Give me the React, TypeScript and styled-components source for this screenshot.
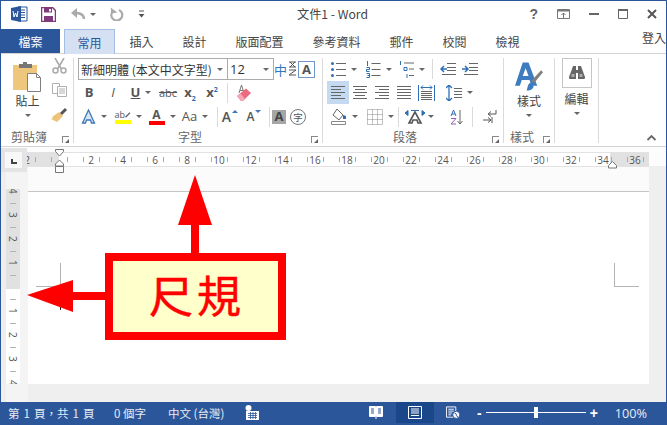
import React from 'react';
import styled, { createGlobalStyle } from 'styled-components';

const GlobalStyle = createGlobalStyle`
  html, body { margin: 0; padding: 0; background: #fff; }
  body { font-family: "Open Sans", "Noto Sans CJK TC", sans-serif; overflow: hidden; }
  * { box-sizing: border-box; }
`;

const CJK = `"Noto Sans CJK TC", "Liberation Sans", sans-serif`;
const BLUE = '#2b579a';

const Root = styled.div`
  position: relative;
  width: 667px;
  height: 425px;
  overflow: hidden;
  display: flex;
  flex-direction: column;
  border: solid ${BLUE};
  border-width: 1px 1px 0 1px;
  background: #fff;
  color: #444;
`;

/* title bar */
const TitleBar = styled.div`
  height: 28px;
  padding-bottom: 2px;
  display: grid;
  grid-template-columns: 1fr auto 1fr;
  align-items: center;
`;
const Qat = styled.div`
  display: flex;
  align-items: center;
  padding-left: 10px;
`;
const QatSlot = styled.div<{ $w: number }>`
  width: ${p => p.$w}px;
  display: flex;
  align-items: center;
`;
const Title = styled.div`
  font: 12.2px ${CJK};
  color: #444;
  margin-left: -2px;
`;
const WinButtons = styled.div`
  display: flex;
  justify-content: flex-end;
  align-items: center;
  padding-right: 9px;
  gap: 19px;
`;
const Help = styled.span`
  font: bold 14px "Liberation Sans", sans-serif;
  color: #666;
`;

/* tabs */
const TabBar = styled.div`
  height: 25px;
  display: flex;
  align-items: stretch;
  border-bottom: 1px solid #d4d4d4;
`;
const FileTab = styled.div`
  width: 59px;
  height: 24px;
  background: ${BLUE};
  color: #fff;
  font: 12px ${CJK};
  display: flex;
  align-items: center;
  justify-content: center;
  margin-right: 4px;
`;
const Tab = styled.div`
  padding: 0 14.5px;
  height: 24px;
  font: 12px ${CJK};
  display: flex;
  align-items: center;
  white-space: nowrap;
  color: #444;
`;
const ActiveTab = styled(Tab)`
  width: 51px;
  height: 25px;
  padding: 0;
  justify-content: center;
  color: ${BLUE};
  background: #d5e1f2;
  border: 1px solid #a3bde3;
  border-bottom: 0;
`;
const SignIn = styled.div`
  margin-left: auto;
  margin-right: 0;
  font: 12px ${CJK};
  white-space: nowrap;
`;

/* ribbon */
const Ribbon = styled.div`
  height: 93px;
  display: flex;
  border-bottom: 1px solid #d4d4d4;
  padding-top: 4px;
`;
const Group = styled.div<{ $w: number }>`
  position: relative;
  width: ${p => p.$w}px;
  height: 85px;
  border-right: 1px solid #dadada;
  display: flex;
  flex-direction: column;
`;
const GroupBody = styled.div`
  flex: none;
  height: 70px;
  display: flex;
  flex-direction: column;
`;
const GroupLabel = styled.div<{ $align?: string; $pl?: number; $pr?: number }>`
  height: 15px;
  font: 12px ${CJK};
  color: #666;
  line-height: 18px;
  text-align: ${p => p.$align || 'center'};
  padding-left: ${p => p.$pl || 0}px;
  padding-right: ${p => p.$pr || 0}px;
`;
const Launcher = styled.span`
  position: absolute;
  right: 4px;
  bottom: 0;
  width: 7px;
  height: 7px;
  border-left: 1px solid #888;
  border-top: 1px solid #888;
  &::after {
    content: '';
    position: absolute;
    right: 0;
    bottom: 0;
    border-style: solid;
    border-width: 0 0 4px 4px;
    border-color: transparent transparent #666 transparent;
  }
`;
const Row = styled.div<{ $h: number; $pl?: number; $mt?: number }>`
  display: flex;
  align-items: center;
  height: ${p => p.$h}px;
  padding-left: ${p => p.$pl || 0}px;
  margin-top: ${p => p.$mt || 0}px;
`;
const Slot = styled.div<{ $w: number; $sel?: boolean; $gap?: number }>`
  width: ${p => p.$w}px;
  height: 100%;
  display: flex;
  align-items: center;
  justify-content: center;
  gap: ${p => (p.$gap === undefined ? 5 : p.$gap)}px;
  flex: none;
  background: ${p => (p.$sel ? '#c5d9f1' : 'transparent')};
`;
const VSep = styled.div`
  width: 1px;
  height: 20px;
  background: #dadada;
  flex: none;
`;
const Caret = styled.span<{ $ml?: number }>`
  width: 0;
  height: 0;
  flex: none;
  margin-left: ${p => p.$ml || 0}px;
  border-style: solid;
  border-width: 3px 3.5px 0 3.5px;
  border-color: #666 transparent transparent transparent;
`;
const Combo = styled.div<{ $w: number }>`
  width: ${p => p.$w}px;
  height: 100%;
  border: 1px solid #ababab;
  margin-right: -1px;
  display: flex;
  align-items: center;
  justify-content: space-between;
  padding: 0 4px 0 2px;
  font: 12px ${CJK};
  color: #333;
  white-space: nowrap;
`;
const SizeValue = styled.span`
  font: 13px "Open Sans", sans-serif;
`;
const HanGlyph = styled.span`
  font: 13px/1 ${CJK};
  color: #2f78c0;
`;
const Letter = styled.span<{ $c?: string; $s?: number; $i?: boolean; $u?: boolean; $w?: number; $st?: boolean }>`
  font-family: "Open Sans", sans-serif;
  font-size: ${p => p.$s || 13}px;
  font-weight: ${p => p.$w || 700};
  font-style: ${p => (p.$i ? 'italic' : 'normal')};
  text-decoration: ${p => (p.$u ? 'underline' : p.$st ? 'line-through' : 'none')};
  color: ${p => p.$c || '#555'};
  line-height: 1;
  sup, sub { font-size: 7px; color: #2b6cb0; font-weight: 700; line-height: 0; }
`;
const Swatch = styled.div`
  display: flex;
  flex-direction: column;
  align-items: center;
  line-height: 1;
`;
const SwatchBar = styled.i<{ $c: string }>`
  display: block;
  width: 16px;
  height: 4px;
  background: ${p => p.$c};
`;
const AccentBox = styled.div`
  width: 17px;
  height: 17px;
  border: 1px solid #6f94c6;
  display: flex;
  align-items: center;
  justify-content: center;
`;
const ShadedBox = styled.div`
  width: 14px;
  height: 14px;
  background: #a6a6a6;
  display: flex;
  align-items: center;
  justify-content: center;
`;
const CircleChar = styled.div`
  width: 16px;
  height: 16px;
  border: 1px solid #777;
  border-radius: 50%;
  font: 9.5px/14px ${CJK};
  text-align: center;
  color: #555;
`;
const ClipWrap = styled.div`
  flex: none;
  height: 70px;
  display: flex;
`;
const BigCol = styled.div<{ $w: number; $pl?: number; $pt?: number }>`
  width: ${p => p.$w}px;
  padding-left: ${p => p.$pl || 0}px;
  padding-top: ${p => p.$pt || 0}px;
  display: flex;
  flex-direction: column;
  align-items: center;
`;
const BigText = styled.div<{ $mt?: number }>`
  font: 12px/16px ${CJK};
  color: #444;
  margin-top: ${p => p.$mt || 0}px;
  margin-bottom: 5px;
`;
const SmallCol = styled.div`
  width: 24px;
  margin-top: -4px;
  display: flex;
  flex-direction: column;
  align-items: center;
`;
const SmallBtn = styled.div`
  height: 24px;
  display: flex;
  align-items: center;
`;
const FindBox = styled.div`
  width: 30px;
  height: 30px;
  border: 1px solid #c6c6c6;
  display: flex;
  align-items: center;
  justify-content: center;
  margin-bottom: 3px;
`;
const RibbonEnd = styled.div`
  flex: 1;
  display: flex;
  align-items: flex-end;
  justify-content: flex-end;
  padding: 0 10px 2px 0;
  height: 85px;
`;

/* workspace */
const Workspace = styled.div`
  flex: 1;
  display: grid;
  position: relative;
  grid-template-columns: 27px 621px 1fr;
  grid-template-rows: 19px 236px;
  background: #efefef;
`;
const RulerCell = styled.div`
  grid-column: 1 / span 3;
  padding: 5px 0 0 26px;
  background: #fcfcfc;
`;
const Ruler = styled.div`
  position: relative;
  width: 622px;
  height: 15px;
  display: flex;
  overflow: hidden;
  border: solid #e2e2e2;
  border-width: 1px 0;
  background: linear-gradient(90deg, #e1e1e1 32px, #fff 32px, #fff 583px, #e1e1e1 583px);
`;
const RulerUnit = styled.div<{ $first?: boolean }>`
  flex: none;
  width: 32px;
  margin-left: ${p => (p.$first ? -16 : 0)}px;
  display: flex;
  justify-content: space-between;
  align-items: center;
  padding: 0 7.5px;
  font: 10px "Open Sans", sans-serif;
  color: #555;
`;
const Tick = styled.i`
  display: block;
  width: 1px;
  height: 5px;
  background: #aaa;
`;
const Corner = styled.div`
  position: absolute;
  left: 0;
  top: 1px;
  width: 26px;
  height: 24px;
  background: #e4e4e4;
  padding: 4px;
  z-index: 2;
`;
const CornerInner = styled.div`
  width: 17px;
  height: 16px;
  background: #f8f8f8;
  display: flex;
  align-items: center;
  justify-content: center;
`;
const LMark = styled.i`
  display: block;
  width: 6px;
  height: 5px;
  margin-top: 2px;
  border-left: 2px solid #444;
  border-bottom: 2px solid #444;
`;
const IndentMarks = styled.svg`
  position: absolute;
  left: 53px;
  top: 2px;
  z-index: 3;
`;
const RightIndent = styled.svg`
  position: absolute;
  left: 606px;
  top: 14px;
  z-index: 3;
`;
const VCol = styled.div`
  padding: 23px 0 0 5px;
  background: linear-gradient(90deg, #eee 5px, #f4f4f4 5px);
`;
const VRuler = styled.div`
  width: 14px;
  height: 195px;
  overflow: hidden;
  background: linear-gradient(180deg, #e1e1e1 100px, #fff 100px);
`;
const VUnit = styled.div<{ $first?: boolean }>`
  position: relative;
  height: 24px;
  margin-top: ${p => (p.$first ? -10 : 0)}px;
  display: flex;
  align-items: center;
  justify-content: center;
  font: 10px "Open Sans", sans-serif;
  color: #555;
  writing-mode: vertical-rl;
  &::before {
    content: '';
    position: absolute;
    top: 0;
    left: 4px;
    width: 6px;
    height: 1px;
    background: #b4b4b4;
  }
`;
const DocArea = styled.div`
  padding-top: 25px;
  background: linear-gradient(180deg, #fbfbfb 25px, #efefef 25px);
`;
const Page = styled.div`
  height: 193px;
  background: #fff;
  border-top: 1px solid #c6c6c6;
  display: flex;
  justify-content: space-between;
  align-items: flex-start;
  padding: 71px 10px 0 8px;
`;
const CropLeft = styled.div`
  position: relative;
  width: 25px;
  height: 24px;
  border-right: 1px solid #b4b4b4;
  border-bottom: 1px solid #b4b4b4;
  &::after {
    content: '';
    position: absolute;
    left: 24px;
    top: 24px;
    width: 1px;
    height: 23px;
    background: #222;
  }
`;
const CropRight = styled.div`
  width: 25px;
  height: 24px;
  border-left: 1px solid #b4b4b4;
  border-bottom: 1px solid #b4b4b4;
`;

/* status bar */
const StatusBar = styled.div`
  height: 23px;
  margin: 0 -1px;
  padding: 0 0 2px 8px;
  background: ${BLUE};
  color: #e6ecf5;
  font: 11.5px ${CJK};
  display: flex;
  align-items: center;
`;
const StatusText = styled.span<{ $w: number; $ws?: number }>`
  width: ${p => p.$w}px;
  flex: none;
  white-space: nowrap;
  word-spacing: ${p => p.$ws || 0}px;
`;
const ViewBtn = styled.div<{ $w: number; $on?: boolean; $ml?: number }>`
  width: ${p => p.$w}px;
  margin-left: ${p => p.$ml || 0}px;
  height: 21px;
  display: flex;
  align-items: center;
  justify-content: center;
  background: ${p => (p.$on ? '#19478a' : 'transparent')};
`;
const ZoomSign = styled.span<{ $ml?: number }>`
  font: bold 14px/1 "Liberation Sans", sans-serif;
  color: #fff;
  margin-left: ${p => p.$ml || 0}px;
`;
const ZoomTrack = styled.div`
  position: relative;
  width: 100px;
  height: 1px;
  margin: 0 4px;
  background: #fff;
`;
const ZoomThumb = styled.i`
  position: absolute;
  left: 48px;
  top: -5px;
  width: 4px;
  height: 11px;
  background: #fff;
`;
const ZoomValue = styled.span`
  margin-left: 17px;
  font: 12.7px "Open Sans", sans-serif;
`;

/* annotation */
const Arrows = styled.svg`
  position: absolute;
  left: -1px;
  top: -1px;
  z-index: 5;
`;
const Callout = styled.div`
  position: absolute;
  left: 104px;
  top: 252px;
  width: 181px;
  height: 87px;
  padding: 0 0 5px 3px;
  border: 8px solid #f00;
  background: #ffc;
  color: #f00;
  font: 44px/1 ${CJK};
  letter-spacing: 4px;
  -webkit-text-stroke: 0.5px #f00;
  display: flex;
  align-items: center;
  justify-content: center;
  z-index: 6;
`;

/* icons */
const WordIcon = () => (
  <svg width="17" height="16" viewBox="0 0 17 16">
    <path d="M7 1h9v14H7z" fill="#fff" stroke="#2b579a" />
    <path d="M9 4h5M9 6.500h5M9 9h5M9 11.500h5" stroke="#2b579a" />
    <path d="M0 2l10-2v16L0 14z" fill="#2b579a" />
    <path d="M2 5l1 6 1.500-4 1.500 4 1-6" fill="none" stroke="#fff" />
  </svg>
);
const SaveIcon = () => (
  <svg width="15" height="15" viewBox="0 0 15 15">
    <path d="M.5.500h11l3 3v11H.5z" fill="#fff" stroke="#80397b" strokeWidth="1.500" />
    <path d="M3 1h8v4.500H3zM3 9h9v5H3z" fill="#80397b" />
    <path d="M8 2h2v2.500H8z" fill="#fff" />
  </svg>
);
const UndoIcon = () => (
  <svg width="15" height="14" viewBox="0 0 15 14">
    <path d="M14 12c0-4-3-6-9-6" fill="none" stroke="#aaa" strokeWidth="2.500" />
    <path d="M7 1L1 6l6 5z" fill="#aaa" />
  </svg>
);
const RedoIcon = () => (
  <svg width="14" height="14" viewBox="0 0 14 14">
    <path d="M9 3a5.500 5.500 0 1 1-6 1" fill="none" stroke="#aaa" strokeWidth="2.200" />
    <path d="M1 0v6h6z" fill="#aaa" transform="rotate(-8 4 3)" />
  </svg>
);
const Customize = () => (
  <svg width="7" height="8" viewBox="0 0 7 8">
    <path d="M1 1h5" stroke="#555" />
    <path d="M.5 4h6L3.500 7.500z" fill="#555" />
  </svg>
);
const RestoreIcon = () => (
  <svg width="13" height="10" viewBox="0 0 13 10">
    <path d="M.5.500h12v9H.5z" fill="none" stroke="#777" />
    <path d="M1 1h11v1.500H1z" fill="#777" />
    <path d="M6.500 9V4M4.500 6l2-2 2 2" fill="none" stroke="#777" />
  </svg>
);
const MinIcon = () => (
  <svg width="10" height="3" viewBox="0 0 10 3"><path d="M0 0h10v2H0z" fill="#666" /></svg>
);
const MaxIcon = () => (
  <svg width="10" height="10" viewBox="0 0 10 10">
    <path d="M.5.500h9v9h-9z" fill="none" stroke="#666" /><path d="M0 0h10v2H0z" fill="#666" />
  </svg>
);
const CloseIcon = () => (
  <svg width="10" height="10" viewBox="0 0 10 10">
    <path d="M1 1l8 8M9 1l-8 8" stroke="#555" strokeWidth="2" />
  </svg>
);
const PasteIcon = () => (
  <svg width="29" height="31" viewBox="0 0 29 31">
    <path d="M0 4h24v25H0z" fill="#efc77c" />
    <path d="M6 3h4V1h4v2h5v4H6z" fill="#777" />
    <path d="M14.500 12.500h9l4 4v14h-13z" fill="#fff" stroke="#808080" />
    <path d="M23.500 12.500v4h4" fill="none" stroke="#808080" />
  </svg>
);
const CutIcon = () => (
  <svg width="15" height="16" viewBox="0 0 15 16">
    <path d="M3 0l6.500 11M12 0L5.500 11" stroke="#aaa" strokeWidth="1.600" />
    <circle cx="3.500" cy="12.500" r="2.500" fill="none" stroke="#aaa" strokeWidth="1.500" />
    <circle cx="11.500" cy="12.500" r="2.500" fill="none" stroke="#aaa" strokeWidth="1.500" />
  </svg>
);
const CopyIcon = () => (
  <svg width="15" height="14" viewBox="0 0 15 14" fill="#fff" stroke="#b0b0b0">
    <path d="M.5.500h7v10h-7z" /><path d="M5.500 3.500h9v10h-9z" />
    <path d="M7 6h6M7 8h6M7 10h6" />
  </svg>
);
const PainterIcon = () => (
  <svg width="17" height="15" viewBox="0 0 17 15">
    <path d="M8 5l4 4-6 6-6-3 2-1-1-1z" fill="#edc37c" />
    <path d="M10 7l5-5" stroke="#555" strokeWidth="3" />
  </svg>
);
const FontSizeGlyph = () => (
  <svg width="9" height="16" viewBox="0 0 9 16" fill="none" stroke="#555">
    <path d="M1 1h7M2 1l5 5M7 1L2 6M1 6h7M1 9h7l-7 5h7" />
  </svg>
);
const EraserIcon = () => (
  <svg width="16" height="17" viewBox="0 0 16 17">
    <path d="M3 9L5.500 1 8 9M4 6.500h3" fill="none" stroke="#777" />
    <path d="M1 12l9-7.500 5 4.500-8 8H5z" fill="#ec6b80" />
    <path d="M1 12l4 5h2l2-2-4.500-5.500z" fill="#f4a6b3" />
  </svg>
);
const OutlineA = () => (
  <svg width="15" height="15" viewBox="0 0 15 15">
    <path d="M7.500 1l-6 13h3l1-3h4l1 3h3z" fill="#d6e6f6" stroke="#3e78b8" strokeWidth="1.300" />
  </svg>
);
const PenStroke = () => (
  <svg width="10" height="10" viewBox="0 0 10 10">
    <path d="M1 9l8-8" stroke="#666" strokeWidth="2.500" />
  </svg>
);
const GrowMark = ({ up }: { up: boolean }) => (
  <svg width="6" height="14" viewBox="0 0 6 14">
    <path d={up ? 'M0 3l3-3 3 3z' : 'M0 0h6L3 3z'} fill="#3e78b8" />
  </svg>
);
const line = '#666';
const ListIcon = ({ kind }: { kind: 'bullet' | 'num' | 'multi' }) => (
  <svg width="15" height="17" viewBox="0 0 15 17">
    {kind === 'bullet' && (
      <>
        <circle cx="1.500" cy="2.500" r="1.500" fill="#2f6fb3" />
        <circle cx="1.500" cy="8.500" r="1.500" fill="#2f6fb3" />
        <circle cx="1.500" cy="14.500" r="1.500" fill="#2f6fb3" />
        <path d="M5 2.500h10M5 8.500h10M5 14.500h10" stroke={line} />
      </>
    )}
    {kind === 'num' && (
      <>
        <path d="M1.500 0v5M.5 6.500h3v2h-3v2h3M.5 12.500h3v4h-3M1.500 14.500h2" stroke="#2f6fb3" fill="none" />
        <path d="M5.500 2.500h9M5.500 8.500h9M5.500 14.500h9" stroke={line} />
      </>
    )}
    {kind === 'multi' && (
      <>
        <path d="M1.500 0v4M5 6.500h3v3H5zM8 13v4" stroke="#2f6fb3" fill="none" />
        <path d="M5 2h10M10 8h5M10 14.500h5" stroke={line} />
      </>
    )}
  </svg>
);
const IndentIcon = ({ out }: { out: boolean }) => (
  <svg width="16" height="12" viewBox="0 0 16 12">
    <path d="M7 .5h9M7 4.500h9M7 7.500h9M2 11.500h14" stroke={line} />
    <path d={out ? 'M7 6H2M4 3L1 6l3 3' : 'M0 6h5M3 3l3 3-3 3'} stroke="#2f6fb3" strokeWidth="1.500" fill="none" />
  </svg>
);
const AlignIcon = ({ mode }: { mode: 'l' | 'c' | 'r' | 'j' }) => {
  const rows = [14, 10, 14, 10, 14].map((w, i) => {
    const full = mode === 'j' ? 14 : w;
    const x = mode === 'c' ? (14 - full) / 2 : mode === 'r' ? 14 - full : 0;
    return `M${x} ${i * 3 + 0.5}h${full}`;
  });
  return (
    <svg width="14" height="13" viewBox="0 0 14 13">
      <path d={rows.join('')} stroke={line} />
    </svg>
  );
};
const DistributeIcon = () => (
  <svg width="17" height="16" viewBox="0 0 17 16">
    <path d="M.5 0v16M16.500 0v16" stroke="#2f6fb3" />
    <path d="M3 2.500h11M5 .5L3 2.500l2 2M12 .5l2 2-2 2" stroke="#2f6fb3" fill="none" />
    <path d="M3 6.500h11M3 8.500h11M3 10.500h11M3 12.500h11M3 14.500h11" stroke={line} />
  </svg>
);
const SpacingIcon = () => (
  <svg width="16" height="16" viewBox="0 0 16 16">
    <path d="M3 0v16M0 3l3-3 3 3M0 13l3 3 3-3" stroke="#2f6fb3" fill="none" strokeWidth="1.300" />
    <path d="M8 3.500h8M8 6.500h8M8 9.500h8M8 12.500h8" stroke={line} />
  </svg>
);
const ShadingIcon = () => (
  <svg width="16" height="17" viewBox="0 0 16 17">
    <path d="M.5 13.500h14v3H.5z" fill="#fff" stroke="#888" />
    <path d="M6 1l6 6-4 5-6-5z" fill="#fff" stroke="#666" />
    <path d="M12 7l3 1v3h-3z" fill="#2f6fb3" />
  </svg>
);
const BordersIcon = () => (
  <svg width="16" height="16" viewBox="0 0 16 16">
    <path d="M.5.500h15v15H.5zM.5 5.500h15M.5 10.500h15M5.500.5v15M10.500.5v15" fill="none" stroke="#888" strokeDasharray="1 1" />
  </svg>
);
const TextDirIcon = () => (
  <svg width="20" height="15" viewBox="0 0 20 15">
    <path d="M10 3L4 14h3l1-3h4l1 3h3z" fill="none" stroke="#555" strokeWidth="1.600" />
    <path d="M0 4l3-2.500v5zM20 4l-3-2.500v5zM6 1.500h8" fill="#2f6fb3" stroke="#2f6fb3" />
  </svg>
);
const SortIcon = () => (
  <svg width="13" height="16" viewBox="0 0 13 16">
    <path d="M3.500 1L1 7M3.500 1L6 7M2 5h3" stroke="#2f6fb3" fill="none" />
    <path d="M1 9.500h5l-5 5.500h5" stroke="#8e5bb5" fill="none" />
    <path d="M10 1v14M7.500 12l2.500 3 2.500-3" stroke="#666" fill="none" />
  </svg>
);
const MarksIcon = () => (
  <svg width="14" height="14" viewBox="0 0 14 14">
    <path d="M13 0v4H6M8 1.500L5 4l3 2.500" stroke="#555" fill="none" />
    <path d="M0 10h7M5 7.500L8 10l-3 2.500M9 7v6" stroke="#555" fill="none" />
  </svg>
);
const StyleIcon = () => (
  <svg width="29" height="30" viewBox="0 0 30 30">
    <path d="M8 0h6l9 24h-6l-2-6H7l-2 6H0zM11 6l-3 8h6z" fill="#3f7cbf" fillRule="evenodd" />
    <path d="M17 19l10-11 2 2-9 11z" fill="#808080" />
    <path d="M12 29c5 0 8-2 7-6l-3-2c-3 1-3 6-4 8z" fill="#3f7cbf" />
  </svg>
);
const BinocularIcon = () => (
  <svg width="16" height="14" viewBox="0 0 16 14" fill="#666">
    <path d="M4 0h3v13H1c-1 0-1-1-1-2l3-8zM9 0h3l1 3 3 8c0 1 0 2-1 2H9z" />
    <path d="M7 4h2v3H7z" />
    <path d="M2.500 8h3v3h-3zM10.500 8h3v3h-3z" fill="#aaa" />
  </svg>
);
const Chevron = () => (
  <svg width="9" height="6" viewBox="0 0 9 6">
    <path d="M.5 5l4-4 4 4" fill="none" stroke="#666" strokeWidth="1.800" />
  </svg>
);
const MacroIcon = () => (
  <svg width="14" height="15" viewBox="0 0 14 15" fill="#fff">
    <circle cx="3.500" cy="3" r="3" />
    <path d="M1 6h13v9H1z" />
    <path d="M3 8.500h9M3 10.500h9M3 12.500h9M5.500 7v7M8 7v7M10.500 7v7" stroke="#2b579a" strokeWidth=".8" />
  </svg>
);
const ReadIcon = () => (
  <svg width="14" height="13" viewBox="0 0 14 13">
    <path d="M.5.500h6v10l-6 0zM7.500.500h6v10h-6z" fill="#fff" stroke="#fff" />
    <path d="M2 3h3M2 5h3M2 7h3M9 3h3M9 5h3M9 7h3" stroke="#2b579a" />
    <path d="M6 12h2" stroke="#fff" />
  </svg>
);
const PrintIcon = () => (
  <svg width="14" height="13" viewBox="0 0 14 13">
    <path d="M.5.500h13v12H.5z" fill="none" stroke="#fff" />
    <path d="M3 3h8M3 5h8M3 7h8M3 9.500h8" stroke="#fff" />
  </svg>
);
const WebIcon = () => (
  <svg width="15" height="13" viewBox="0 0 15 13">
    <path d="M.5.500h10v11H.5z" fill="none" stroke="#fff" />
    <path d="M2.500 3h6M2.500 5h6M2.500 7h4M2.500 9h3" stroke="#fff" />
    <circle cx="11" cy="9" r="3.800" fill="#fff" stroke="#2b579a" />
    <path d="M9 7l2 1v2l2 1" stroke="#2b579a" fill="none" />
  </svg>
);

const rulerLabels = ['2', '', ...Array.from({ length: 18 }, (_, i) => String((i + 1) * 2))];
const vLabels = ['4', '3', '2', '1', '', '1', '2', '3', '4'];

export default function App() {
  return (
    <>
      <GlobalStyle />
      <Root>
        <TitleBar>
          <Qat>
            <QatSlot $w={30}><WordIcon /></QatSlot>
            <QatSlot $w={29}><SaveIcon /></QatSlot>
            <QatSlot $w={40}>
              <UndoIcon />
              <Caret $ml={5} />
            </QatSlot>
            <QatSlot $w={28}><RedoIcon /></QatSlot>
            <Customize />
          </Qat>
          <Title>文件1 - Word</Title>
          <WinButtons>
            <Help>?</Help>
            <RestoreIcon />
            <MinIcon />
            <MaxIcon />
            <CloseIcon />
          </WinButtons>
        </TitleBar>

        <TabBar>
          <FileTab>檔案</FileTab>
          <ActiveTab>常用</ActiveTab>
          <Tab>插入</Tab>
          <Tab>設計</Tab>
          <Tab>版面配置</Tab>
          <Tab>參考資料</Tab>
          <Tab>郵件</Tab>
          <Tab>校閱</Tab>
          <Tab>檢視</Tab>
          <SignIn>登入</SignIn>
        </TabBar>

        <Ribbon>
          <Group $w={73}>
            <ClipWrap>
              <BigCol $w={46} $pl={7} $pt={3}>
                <PasteIcon />
                <BigText $mt={1}>貼上</BigText>
                <Caret />
              </BigCol>
              <SmallCol>
                <SmallBtn><CutIcon /></SmallBtn>
                <SmallBtn><CopyIcon /></SmallBtn>
                <SmallBtn><PainterIcon /></SmallBtn>
              </SmallCol>
            </ClipWrap>
            <GroupLabel $align="left" $pl={10}>剪貼簿</GroupLabel>
            <Launcher />
          </Group>

          <Group $w={249}>
            <GroupBody>
              <Row $h={22} $pl={4}>
                <Combo $w={150}>新細明體 (本文中文字型)<Caret /></Combo>
                <Combo $w={47}><SizeValue>12</SizeValue><Caret /></Combo>
                <Slot $w={25} $gap={1}>
                  <HanGlyph>中</HanGlyph>
                  <FontSizeGlyph />
                </Slot>
                <AccentBox><Letter $s={13}>A</Letter></AccentBox>
              </Row>
              <Row $h={23} $pl={3} $mt={1}>
                <Slot $w={24}><Letter>B</Letter></Slot>
                <Slot $w={24}><Letter $i $w={400}>I</Letter></Slot>
                <Slot $w={32}><Letter $u>U</Letter><Caret /></Slot>
                <Slot $w={22}><Letter $st $s={11} $w={400}>abc</Letter></Slot>
                <Slot $w={22}><Letter>x<sub>2</sub></Letter></Slot>
                <Slot $w={22}><Letter>x<sup>2</sup></Letter></Slot>
                <Slot $w={4} />
                <VSep />
                <Slot $w={32}><EraserIcon /></Slot>
              </Row>
              <Row $h={23} $pl={3} $mt={1}>
                <Slot $w={34}><OutlineA /><Caret /></Slot>
                <Slot $w={34}>
                  <Swatch>
                    <Slot $w={16} $gap={0}>
                      <Letter $s={9} $w={400}>ab</Letter>
                      <PenStroke />
                    </Slot>
                    <SwatchBar $c="#ff0" />
                  </Swatch>
                  <Caret />
                </Slot>
                <Slot $w={34}>
                  <Swatch>
                    <Letter $s={12}>A</Letter>
                    <SwatchBar $c="#f00" />
                  </Swatch>
                  <Caret />
                </Slot>
                <Slot $w={32}><Letter $w={400} $s={13}>Aa</Letter><Caret /></Slot>
                <Slot $w={6} />
                <VSep />
                <Slot $w={24} $gap={1}>
                  <Letter $s={14} $w={600}>A</Letter><GrowMark up />
                </Slot>
                <Slot $w={24} $gap={1}>
                  <Letter $s={12} $w={600}>A</Letter><GrowMark up={false} />
                </Slot>
                <Slot $w={3} />
                <VSep />
                <Slot $w={18}><ShadedBox><Letter $s={13} $c="#444">A</Letter></ShadedBox></Slot>
                <Slot $w={20}><CircleChar>字</CircleChar></Slot>
              </Row>
            </GroupBody>
            <GroupLabel $pr={16}>字型</GroupLabel>
            <Launcher />
          </Group>

          <Group $w={181}>
            <GroupBody>
              <Row $h={22} $pl={3}>
                <Slot $w={36}><ListIcon kind="bullet" /><Caret /></Slot>
                <Slot $w={34}><ListIcon kind="num" /><Caret /></Slot>
                <Slot $w={32}><ListIcon kind="multi" /><Caret /></Slot>
                <Slot $w={4} />
                <VSep />
                <Slot $w={29}><IndentIcon out /></Slot>
                <Slot $w={16}><IndentIcon out={false} /></Slot>
              </Row>
              <Row $h={23} $pl={4} $mt={1}>
                <Slot $w={22} $sel><AlignIcon mode="l" /></Slot>
                <Slot $w={22}><AlignIcon mode="c" /></Slot>
                <Slot $w={22}><AlignIcon mode="r" /></Slot>
                <Slot $w={22}><AlignIcon mode="j" /></Slot>
                <Slot $w={22}><DistributeIcon /></Slot>
                <Slot $w={45}><SpacingIcon /><Caret /></Slot>
              </Row>
              <Row $h={23} $pl={3} $mt={1}>
                <Slot $w={37}><ShadingIcon /><Caret /></Slot>
                <Slot $w={35}><BordersIcon /><Caret /></Slot>
                <VSep />
                <Slot $w={41} $gap={3}><TextDirIcon /><Caret /></Slot>
                <Slot $w={32}><SortIcon /></Slot>
                <VSep />
                <Slot $w={34}><MarksIcon /></Slot>
              </Row>
            </GroupBody>
            <GroupLabel $pr={16}>段落</GroupLabel>
            <Launcher />
          </Group>

          <Group $w={51}>
            <GroupBody>
              <BigCol $w={50} $pt={4}>
                <StyleIcon />
                <BigText $mt={1}>樣式</BigText>
                <Caret />
              </BigCol>
            </GroupBody>
            <GroupLabel $align="left" $pl={6}>樣式</GroupLabel>
            <Launcher />
          </Group>

          <Group $w={44}>
            <GroupBody>
              <BigCol $w={43}>
                <FindBox><BinocularIcon /></FindBox>
                <BigText>編輯</BigText>
                <Caret />
              </BigCol>
            </GroupBody>
          </Group>

          <RibbonEnd><Chevron /></RibbonEnd>
        </Ribbon>

        <Workspace>
          <RulerCell>
            <Ruler>
              {rulerLabels.map((label, i) => (
                <RulerUnit key={i} $first={i === 0}>
                  <Tick />
                  {label && <span>{label}</span>}
                  <Tick />
                </RulerUnit>
              ))}
            </Ruler>
          </RulerCell>
          <Corner><CornerInner><LMark /></CornerInner></Corner>
          <IndentMarks width="11" height="25" viewBox="0 0 11 25" fill="#fff" stroke="#777">
            <path d="M1.500.5h8v2L5.500 7l-4-4.500z" />
            <path d="M5.500 11l4 4v2h-8v-2z" />
            <path d="M1.500 17.500h8v6h-8z" />
          </IndentMarks>
          <RightIndent width="11" height="8" viewBox="0 0 11 8" fill="#fff" stroke="#777">
            <path d="M5.500.5l4 4v2.500h-8V4.500z" />
          </RightIndent>
          <VCol>
            <VRuler>
              {vLabels.map((label, i) => (
                <VUnit key={i} $first={i === 0}>{label}</VUnit>
              ))}
            </VRuler>
          </VCol>
          <DocArea>
            <Page>
              <CropLeft />
              <CropRight />
            </Page>
          </DocArea>
        </Workspace>

        <StatusBar>
          <StatusText $w={106} $ws={1.5}>第 1 頁，共 1 頁</StatusText>
          <StatusText $w={54}>0 個字</StatusText>
          <StatusText $w={77}>中文 (台灣)</StatusText>
          <MacroIcon />
          <ViewBtn $w={14} $ml={110}><ReadIcon /></ViewBtn>
          <ViewBtn $w={38} $ml={13} $on><PrintIcon /></ViewBtn>
          <ViewBtn $w={14} $ml={12}><WebIcon /></ViewBtn>
          <ZoomSign $ml={17}>-</ZoomSign>
          <ZoomTrack><ZoomThumb /></ZoomTrack>
          <ZoomSign>+</ZoomSign>
          <ZoomValue>100%</ZoomValue>
        </StatusBar>

        <Arrows width="667" height="425" viewBox="0 0 667 425">
          <path d="M195 175l17 50h-13v30h-8v-30h-13z" fill="#f00" />
          <path d="M27 295l46-15v12h34v8H73v12z" fill="#f00" />
        </Arrows>
        <Callout>尺規</Callout>
      </Root>
    </>
  );
}
